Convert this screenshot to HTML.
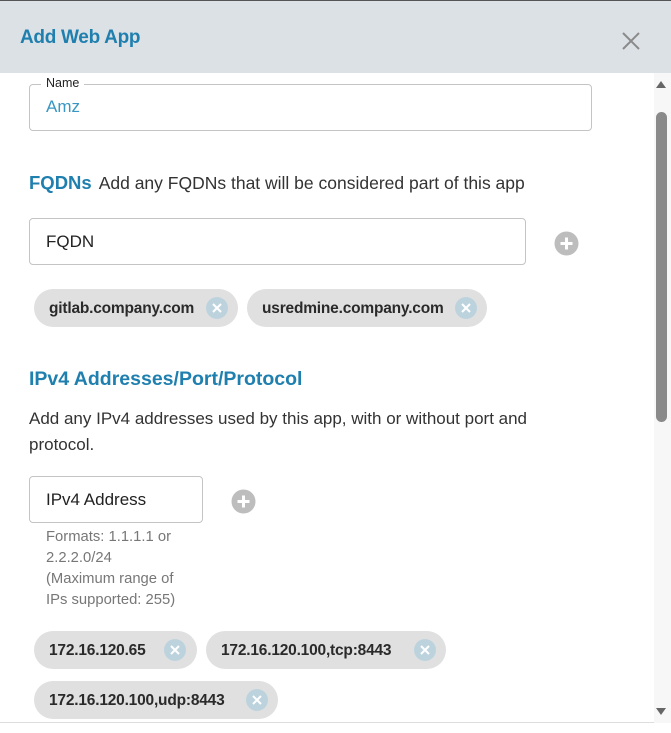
<!DOCTYPE html>
<html><head><meta charset="utf-8"><style>
*{box-sizing:border-box;margin:0;padding:0}
body{width:671px;height:733px;overflow:hidden;background:#fff;font-family:"Liberation Sans",sans-serif;position:relative;color:#222}
.a{position:absolute}
.hdr{left:0;top:0;width:671px;height:73px;background:#dce1e5;border-top:1px solid #555}
.title{left:20px;top:27px;font-size:19px;color:#1f7fae;font-weight:bold;letter-spacing:-0.3px}
.box{border:1px solid #c4c4c4;border-radius:4px;background:#fff}
.chip{height:38px;border-radius:19px;background:#e0e0e0;font-size:15.5px;font-weight:bold;color:#2a2a2a;line-height:39px;padding-left:15px;white-space:nowrap;letter-spacing:-0.2px}
.chip svg{position:absolute;top:8px}
.blue{color:#1f7fae;font-weight:bold}
.t16{font-size:17px;color:#333}
.help{font-size:14.8px;color:#777;line-height:21px}
</style></head><body>
<div class="a hdr"></div>
<div class="a title">Add Web App</div>
<svg class="a" style="left:621px;top:31px" width="20" height="20"><path d="M2 2L18 18M18 2L2 18" stroke="#8a8a8a" stroke-width="2"/></svg>

<div class="a" style="left:654px;top:73px;width:17px;height:650px;background:#f7f7f7"></div>
<svg class="a" style="left:655px;top:80px" width="12" height="10"><path d="M6 1L11 8H1Z" fill="#666"/></svg>
<div class="a" style="left:656px;top:112px;width:11px;height:310px;background:#8a8a8a;border-radius:6px"></div>
<svg class="a" style="left:655px;top:707px" width="12" height="10"><path d="M1 1H11L6 8Z" fill="#666"/></svg>
<div class="a" style="left:0;top:722px;width:654px;height:1px;background:#ddd"></div>

<div class="a box" style="left:29px;top:84px;width:563px;height:47px"></div>
<div class="a" style="left:41px;top:76px;background:#fff;padding:0 5px;font-size:12.5px;color:#222">Name</div>
<div class="a" style="left:46px;top:97px;font-size:17px;color:#3a96c2">Amz</div>

<div class="a" style="left:29px;top:172px;font-size:17.5px"><span class="blue" style="font-size:18.5px">FQDNs</span><span style="color:#333;margin-left:7px">Add any FQDNs that will be considered part of this app</span></div>
<div class="a box" style="left:29px;top:218px;width:497px;height:47px"></div>
<div class="a t16" style="left:46px;top:232px;color:#222">FQDN</div>
<svg class="a" style="left:554px;top:231px" width="25" height="25"><circle cx="12.5" cy="12.5" r="12" fill="#bdbdbd"/><path d="M12.5 6.5V18.5M6.5 12.5H18.5" stroke="#fff" stroke-width="3"/></svg>

<div class="a chip" style="left:34px;top:289px;width:204px">gitlab.company.com<svg style="left:172px" width="22" height="22"><circle cx="11" cy="11" r="11" fill="#bcd3de"/><path d="M7 7L15 15M15 7L7 15" stroke="#fff" stroke-width="2"/></svg></div>
<div class="a chip" style="left:247px;top:289px;width:240px">usredmine.company.com<svg style="left:208px" width="22" height="22"><circle cx="11" cy="11" r="11" fill="#bcd3de"/><path d="M7 7L15 15M15 7L7 15" stroke="#fff" stroke-width="2"/></svg></div>

<div class="a blue" style="left:29px;top:368px;font-size:19.5px">IPv4 Addresses/Port/Protocol</div>
<div class="a t16" style="left:29px;top:406px;line-height:26px;width:560px">Add any IPv4 addresses used by this app, with or without port and protocol.</div>
<div class="a box" style="left:29px;top:476px;width:174px;height:47px"></div>
<div class="a t16" style="left:46px;top:490px;color:#222">IPv4 Address</div>
<svg class="a" style="left:231px;top:489px" width="25" height="25"><circle cx="12.5" cy="12.5" r="12" fill="#bdbdbd"/><path d="M12.5 6.5V18.5M6.5 12.5H18.5" stroke="#fff" stroke-width="3"/></svg>
<div class="a help" style="left:46px;top:527px">Formats: 1.1.1.1 or<br>2.2.2.0/24<br>(Maximum range of<br>IPs supported: 255)</div>

<div class="a chip" style="left:34px;top:631px;width:163px">172.16.120.65<svg style="left:130px" width="22" height="22"><circle cx="11" cy="11" r="11" fill="#bcd3de"/><path d="M7 7L15 15M15 7L7 15" stroke="#fff" stroke-width="2"/></svg></div>
<div class="a chip" style="left:206px;top:631px;width:240px">172.16.120.100,tcp:8443<svg style="left:208px" width="22" height="22"><circle cx="11" cy="11" r="11" fill="#bcd3de"/><path d="M7 7L15 15M15 7L7 15" stroke="#fff" stroke-width="2"/></svg></div>
<div class="a chip" style="left:34px;top:681px;width:244px">172.16.120.100,udp:8443<svg style="left:212px" width="22" height="22"><circle cx="11" cy="11" r="11" fill="#bcd3de"/><path d="M7 7L15 15M15 7L7 15" stroke="#fff" stroke-width="2"/></svg></div>
</body></html>
